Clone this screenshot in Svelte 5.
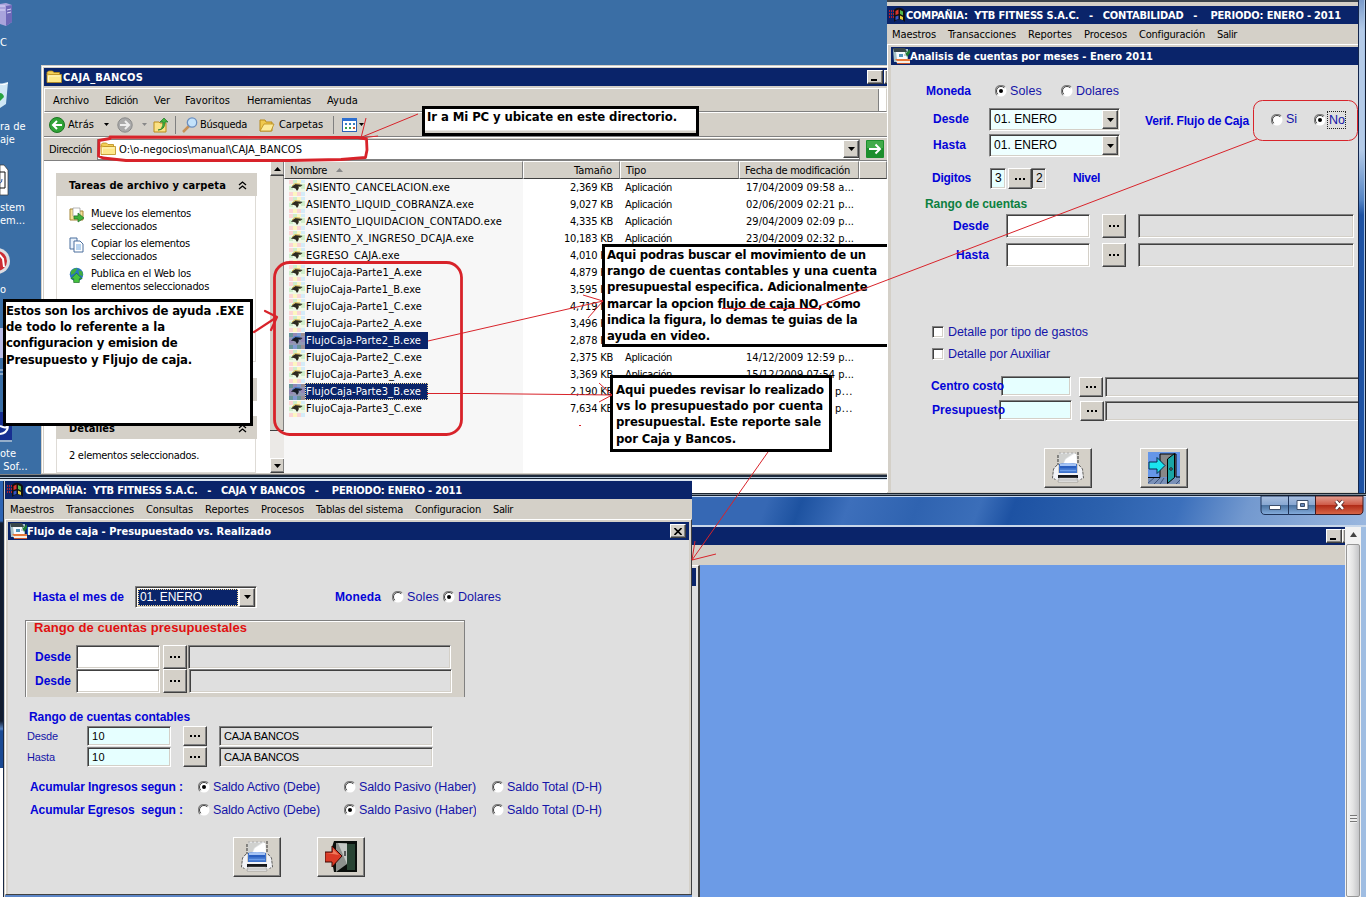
<script>
  function fit(node, width) {
    if (!width) return;
    const now = node.getBoundingClientRect().width;
    node.style.letterSpacing = (width - now) / node.textContent.length + 'px';
  }

  const files = [
    ['ASIENTO_CANCELACION.exe', 144, '2,369 KB', '17/04/2009 09:58 a...'],
    ['ASIENTO_LIQUID_COBRANZA.exe', 168, '9,027 KB', '02/06/2009 02:21 p...'],
    ['ASIENTO_LIQUIDACION_CONTADO.exe', 196, '4,335 KB', '29/04/2009 02:09 p...'],
    ['ASIENTO_X_INGRESO_DCAJA.exe', 168, '10,183 KB', '23/04/2009 02:32 p...'],
    ['EGRESO_CAJA.exe', 94, '4,010 KB', ''],
    ['FlujoCaja-Parte1_A.exe', 116, '4,879 KB', ''],
    ['FlujoCaja-Parte1_B.exe', 115, '3,595 KB', ''],
    ['FlujoCaja-Parte1_C.exe', 116, '4,719 KB', ''],
    ['FlujoCaja-Parte2_A.exe', 116, '3,496 KB', ''],
    ['FlujoCaja-Parte2_B.exe', 115, '2,878 KB', '', true],
    ['FlujoCaja-Parte2_C.exe', 116, '2,375 KB', '14/12/2009 12:59 p...'],
    ['FlujoCaja-Parte3_A.exe', 116, '3,369 KB', '15/12/2009 07:54 p...'],
    ['FlujoCaja-Parte3_B.exe', 115, '2,190 KB', 'p...', true],
    ['FlujoCaja-Parte3_C.exe', 116, '7,634 KB', 'p...']
  ];
</script>

{#snippet t(text, w, cls = '')}<span class="t {cls}" use:fit={w}>{text}</span>{/snippet}

{#snippet radio(on)}
  <svg class="radio" width="12" height="12" viewBox="0 0 12 12">
    <circle cx="6" cy="6" r="5.5" fill="#fff" />
    <path d="M2 10A5.5 5.5 0 0 1 10 2" fill="none" stroke="#808080" stroke-width="1.1" />
    <path d="M2.8 9.2A4.5 4.5 0 0 1 9.2 2.8" fill="none" stroke="#404040" stroke-width="1" />
    {#if on}<circle cx="6" cy="6" r="2" fill="#000" />{/if}
  </svg>
{/snippet}

{#snippet dots()}<span class="btn"><svg width="11" height="2" viewBox="0 0 11 2" shape-rendering="crispEdges"><path d="M0 0h2v2H0zM4 0h2v2H4zM8 0h2v2H8z" fill="#000" /></svg></span>{/snippet}

{#snippet down()}<span class="btn arrow"><svg width="7" height="4" viewBox="0 0 7 4"><path d="M0 0H7L3.500 4Z" fill="#000" /></svg></span>{/snippet}

{#snippet folder()}
  <svg width="16" height="16" viewBox="0 0 16 16">
    <path d="M1 3.500 2.500 2h4L8 3.500h5.500V6H1z" fill="#f3cf56" stroke="#b98b1b" stroke-width=".8" />
    <path d="M1 13.500V5L4 5.500h11.500v8z" fill="#fde88a" stroke="#b98b1b" stroke-width=".8" />
    <path d="M2.500 12.500V7h12" fill="none" stroke="#fff6c4" />
  </svg>
{/snippet}

{#snippet bird()}
  <svg width="16" height="16" viewBox="0 0 16 16">
    <rect width="16" height="16" fill="#eef8e6" />
    <path d="M0 0h4v4H0zM8 12h4v4H8zM0 12h4v4H0z" fill="#fbd5d5" />
    <path d="M4 0h4v4H4zM12 4h4v5h-4zM0 6h4v4H0z" fill="#cfeecb" />
    <path d="M8 0h4v3H8zM4 12h4v4H4z" fill="#fdf7c0" />
    <path d="M12 0h4v3h-4zM12 12h4v4h-4z" fill="#d5ecf8" />
    <path d="M2 8 4 5.500 6.500 4 10 4.200 13.500 5 12 6.200 10 6.500 9.500 9 8 11 6.500 8.500 4 7.700Z" fill="#2d2a20" />
    <path d="M3 6 6 3.600l5 .4" stroke="#d9b84a" fill="none" />
    <path d="m9 7 3-1" stroke="#6d7448" fill="none" />
  </svg>
{/snippet}

{#snippet appicon()}
  <svg width="16" height="16" viewBox="0 0 16 16">
    <path d="M0 4h5M0 7h5M0 10h5" stroke="#b3202c" stroke-dasharray="1 1" stroke-width="2" />
    <path d="M5 3C8 0 13 0 16 4v11C12 11 9 12 5 15Z" fill="#111" />
    <path d="m6.500 4 3-1.500V7L6.500 8z" fill="#d8362e" /><path d="m11 3 3 1.500v4L11 7z" fill="#52b84c" />
    <path d="m6.500 9.500 3-1V12l-3 1z" fill="#3556c8" /><path d="m11 8.500 3 1.500v3L11 12z" fill="#e7cf3b" />
  </svg>
{/snippet}

{#snippet formicon()}
  <svg width="17" height="16" viewBox="0 0 17 16">
    <path d="M0 1h15v13H1z" fill="#a9c4c8" /><path d="M0 0h12l2 4H1z" fill="#39474a" />
    <path d="M3 4h11v7H4z" fill="#f7fbff" /><path d="M6 6h4v3H6z" fill="#4f93b8" /><path d="M11 7h2" stroke="#99a" />
    <path d="m11 2 2 3 4-4v4l-3 4z" fill="#207b36" /><path d="M2 11h15v2H4z" fill="#e8793a" /><path d="M3 13h14v2H4z" fill="#f5eee4" /><path d="M4 15h13v1H4z" fill="#c8552d" />
  </svg>
{/snippet}

{#snippet printer()}
  <svg width="32" height="32" viewBox="0 0 32 32">
    <path d="M6.500 15V3L8 1h15l2 2v12z" fill="#e2e4e6" />
    <path d="M6 3v10M26 0v12" stroke="#333" stroke-dasharray="3 1" /><path d="M7 1h17" stroke="#aaa" stroke-dasharray="2 2" />
    <path d="M12 11 14 7 22 2h2l1 9z" fill="#fff" /><path d="M7 2h13L13 7l-2 5H7z" fill="#d0d1cf" />
    <path d="M7 12q8-2 18 0v9H7z" fill="#3d72cc" /><path d="M8 12q8-2 16 0v4H8z" fill="#a6c4f4" /><path d="M8 15h16" stroke="#2a5fc0" stroke-width="2" /><path d="M8 18.500h16" stroke="#6c9eea" stroke-width="1.500" />
    <path d="M6 13 2 16 .5 26l3 1.500H29l2.500-1.500L30 16l-4-3v8H6z" fill="#f2f3f7" />
    <path d="M5 13 1.500 17 .5 26l3 1.500M27 13l3.500 4 1 9-3 1.500" fill="none" stroke="#555" stroke-dasharray="3 1" stroke-width=".9" />
    <path d="M6 23h20v3H6z" fill="#16171b" /><path d="M7 26h18l1 4H6z" fill="#fff" stroke="#888" stroke-width=".6" /><path d="M7 28h18" stroke="#999" />
  </svg>
{/snippet}

{#snippet chevrons()}
  <svg width="9" height="9" viewBox="0 0 9 9"><path d="m1 4 3.500-3L8 4M1 8l3.500-3L8 8" fill="none" stroke="#000" stroke-width="1.300" /></svg>
{/snippet}

<div class="desktop">
  <svg class="shortcuts" width="40" height="475" viewBox="0 0 40 475">
    <path d="m0 4 6-1 6 2v17l-6 4-6-2z" fill="#a9a4dc" /><path d="m6 6 6-1v17l-6 4z" fill="#6f68b8" /><path d="M0 6h5M0 10h5M7 10l4-1M7 13l4-1" stroke="#dcd9fa" />
    <path d="M0 84 8 82 6 104 0 108z" fill="#cfe7f5" /><path d="M0 93q3 0 4 4l-4 4z" fill="#26a340" /><path d="M0 84q4 2 8-1" stroke="#fff" fill="none" />
    <path d="M0 165h4l4 5v25H0z" fill="#fff" stroke="#333" stroke-width=".7" /><path d="M0 172h5v16H0" fill="none" stroke="#111" /><path d="M0 183q2 0 2-4" stroke="#2858a8" fill="none" />
    <circle cx="-3" cy="261" r="13" fill="#dcdde2" /><circle cx="-3" cy="261" r="10" fill="#cc2c33" /><path d="m-1 254 4 5 1 8" stroke="#fff" fill="none" stroke-width="2" />
    <path d="M0 328h4v30H0z" fill="#b9bce6" /><path d="M0 370h4M0 374h4" stroke="#dde5ee" />
    <path d="M0 412h12v28H0z" fill="#172f91" /><path d="M0 426q8 4 9-3M0 434q7-1 8-7" stroke="#fff" fill="none" stroke-width="2" />
    <path d="M0 441h12" stroke="#eee" />
  </svg>
  <div class="captions">
    <span class="c1">PC</span><span class="c2">ra de<br />aje</span><span class="c3">stem<br />em...</span><span class="c4">o</span><span class="c5">ote<br />&nbsp;Sof...</span>
  </div>

  <section class="explorer">
    <header class="title">{@render folder()}{@render t('CAJA_BANCOS', 80)}<span class="btn min"></span><span class="btn min2"></span></header>
    <nav class="exmenu">
      {@render t('Archivo', 36)}{@render t('Edición', 33)}{@render t('Ver', 16)}{@render t('Favoritos', 45)}{@render t('Herramientas', 64)}{@render t('Ayuda', 31)}<i></i>
    </nav>
    <div class="tools">
      <svg width="16" height="16" viewBox="0 0 16 16"><circle cx="8" cy="8" r="7.500" fill="#2fa336" stroke="#1c7523" /><path d="M13 8H4M8 4 4 8l4 4" stroke="#fff" stroke-width="2" fill="none" /></svg>
      {@render t('Atrás', 26)}
      <svg width="5" height="3"><path d="M0 0h5L2.500 3z" /></svg>
      <svg width="16" height="16" viewBox="0 0 16 16"><circle cx="8" cy="8" r="7.200" fill="#a9a9a9" stroke="#8a8a8a" /><path d="M3 8h9M8 4l4 4-4 4" stroke="#eee" stroke-width="2" fill="none" /></svg>
      <svg width="5" height="3"><path d="M0 0h5L2.500 3z" fill="#888" /></svg>
      <svg width="16" height="16" viewBox="0 0 16 16"><path d="M1 5h5l1 1h6v9H1z" fill="#fbe284" stroke="#b98b1b" /><path d="M5 13q5 0 5-8H7l4-4 4 4h-3q0 8-7 8z" fill="#43b63e" stroke="#207526" stroke-width=".7" /></svg>
      <b></b>
      <svg width="16" height="16" viewBox="0 0 16 16"><path d="m1 15 6-6" stroke="#c79157" stroke-width="2.500" /><circle cx="10" cy="5.500" r="4.700" fill="#c3e2fb" stroke="#6b8fc0" stroke-width="1.300" /></svg>
      {@render t('Búsqueda', 47)}
      <svg width="16" height="16" viewBox="0 0 16 16"><path d="M1 3h5l1 2h6v9H1z" fill="#f0c94e" stroke="#b98b1b" /><path d="M5 7h10l-3 7H1z" fill="#fdeb9a" stroke="#b98b1b" stroke-width=".8" /></svg>
      {@render t('Carpetas', 44)}
      <b></b>
      <svg width="15" height="14" viewBox="0 0 15 14"><rect x=".5" y=".5" width="14" height="13" fill="#fff" stroke="#2a62b8" /><path d="M0 0h15v3H0z" fill="#2d6fd0" /><path d="M3 6h2M7 6h2M11 6h2" stroke="#3a7fc2" stroke-width="2" /><path d="M3 10h2M7 10h2" stroke="#35a04a" stroke-width="2" /><path d="M11 10h2" stroke="#c05a3a" stroke-width="2" /></svg>
      <svg width="5" height="3"><path d="M0 0h5L2.500 3z" /></svg>
    </div>
    <div class="address">
      {@render t('Dirección', 43)}
      <div class="path">{@render folder()}{@render t('O:\\o-negocios\\manual\\CAJA_BANCOS', 183)}{@render down()}</div>
      <svg width="18" height="18" viewBox="0 0 18 18"><rect width="18" height="18" rx="1" fill="#1c8f2c" /><path d="M1 1h16v7H1z" fill="#41ab49" /><path d="M3 9h11M9.500 4.500 14 9l-4.500 4.500" stroke="#fff" stroke-width="2" fill="none" /></svg>
    </div>
    <div class="content">
      <aside>
        <div class="phead first">{@render t('Tareas de archivo y carpeta', 157)}{@render chevrons()}</div>
        <div class="pbody tasks">
          <div class="task">
            <svg width="15" height="16" viewBox="0 0 15 16"><path d="M1 2h6l1 2h6v9H1z" fill="#f6e197" stroke="#a38638" /><path d="M4 1h7v8H4z" fill="#fff" stroke="#888" stroke-width=".6" /><path d="M5 9h4V6l6 5-6 4v-3H5z" fill="#40b23b" stroke="#1f7022" stroke-width=".7" /></svg>
            <p>{@render t('Mueve los elementos', 100)}<br />{@render t('seleccionados', 66)}</p>
          </div>
          <div class="task">
            <svg width="15" height="16" viewBox="0 0 15 16"><path d="M1 1h7v11H1z" fill="#e9f2fc" stroke="#4b6e9d" /><path d="M5 4h6l3 3v8H5z" fill="#fff" stroke="#4b6e9d" /><path d="M7 8h5M7 10h5M7 12h5" stroke="#70a8df" /></svg>
            <p>{@render t('Copiar los elementos', 99)}<br />{@render t('seleccionados', 66)}</p>
          </div>
          <div class="task">
            <svg width="16" height="16" viewBox="0 0 16 16"><circle cx="8" cy="7.500" r="7.200" fill="#2a75c4" /><path d="M2 4q4-4 7-3L6 6 2 8zM10 3l4 1 1 5-4-1z" fill="#43ae3c" /><path d="m8 6 6 6h-3v4H5v-4H2z" fill="#45c23e" stroke="#176b25" stroke-width=".7" /></svg>
            <p>{@render t('Publica en el Web los', 100)}<br />{@render t('elementos seleccionados', 118)}</p>
          </div>
        </div>
        <div class="phead mid"></div>
        <div class="phead details">{@render t('Detalles', 46)}{@render chevrons()}</div>
        <div class="pbody info">{@render t('2 elementos seleccionados.', 130)}</div>
      </aside>
      <div class="scroll">
        <span class="btn"><svg width="7" height="4"><path d="M0 4h7L3.500 0z" /></svg></span>
        <span class="thumb"></span><span class="track"></span>
        {@render down()}
      </div>
      <div class="list">
        <div class="cols head">
          <span>{@render t('Nombre', 37)}<svg width="7" height="4"><path d="M0 4h7L3.500 0z" fill="#888" /></svg></span>
          <span class="num">{@render t('Tamaño', 38)}</span><span>{@render t('Tipo', 20)}</span><span>{@render t('Fecha de modificación', 105)}</span><span></span>
        </div>
        {#each files as [name, w, size, date, sel], i}
          <div class="cols">
            <span class="name" class:sel class:focus={i === 12}><i>{@render bird()}</i><em>{@render t(name, w)}</em></span>
            <span class="num">{@render t(size, size.length > 8 ? 49 : 43)}</span>
            <span class="kind">{#if i < 4 || i === 10 || i === 11}{@render t('Aplicación', 47)}{/if}</span>
            <span class="date" class:tail={date.length === 4}>{#if date}{@render t(date, date.length === 4 ? 18 : 108)}{/if}</span>
          </div>
        {/each}
      </div>
    </div>
  </section>
  <div class="seam"></div>

  <section class="aero">
    <div class="glass"></div>
    <svg class="caps" width="104" height="20" viewBox="0 0 104 20">
      <defs>
        <linearGradient id="cb" x2="0" y2="1"><stop offset="0" stop-color="#a9c0e0" /><stop offset=".48" stop-color="#88a7d2" /><stop offset=".5" stop-color="#49719f" /><stop offset="1" stop-color="#86aede" /></linearGradient>
        <linearGradient id="cr" x2="0" y2="1"><stop offset="0" stop-color="#e3a093" /><stop offset=".48" stop-color="#cf5a47" /><stop offset=".5" stop-color="#b02a17" /><stop offset="1" stop-color="#d96849" /></linearGradient>
      </defs>
      <path d="M1 0h27.500v18.500H5Q1 18.500 1 14z" fill="url(#cb)" stroke="#1f3358" /><path d="M28.500 0h27v18.500h-27z" fill="url(#cb)" stroke="#1f3358" />
      <path d="M55.500 0H103v14q0 4.500-4 4.500H55.500z" fill="url(#cr)" stroke="#3e1a20" />
      <path d="M9.500 9.500h11v4h-11z" fill="#fff" stroke="#3d4f6b" /><path d="M37 4.500h11v9H37z" fill="#fff" stroke="#3d4f6b" /><path d="M40.500 7.500h4v3h-4z" fill="#6a89b8" stroke="#3d4f6b" />
      <path d="m76 5 7 8m0-8-7 8" stroke="#4b2224" stroke-width="4" /><path d="m76 5 7 8m0-8-7 8" stroke="#fff" stroke-width="2.500" />
    </svg>
    <div class="inner">
      <div class="mdi"><div class="navy"><span class="btn min"></span><span class="btn min2"></span></div><div class="gray"></div><div class="canvas"><span class="stub"><b></b></span></div></div>
      <div class="vscroll"><svg width="7" height="5"><path d="M0 5h7L3.500 0z" fill="#444" /></svg><span><i></i></span></div>
    </div>
  </section>

  <section class="rightwin">
    <header class="apptitle">{@render appicon()}{@render t('COMPAÑIA:  YTB FITNESS S.A.C.   -   CONTABILIDAD   -    PERIODO: ENERO - 2011', 435)}</header>
    <nav class="appmenu">{@render t('Maestros', 44)}{@render t('Transacciones', 68)}{@render t('Reportes', 44)}{@render t('Procesos', 43)}{@render t('Configuración', 66)}{@render t('Salir', 20)}</nav>
    <div class="child">
      <header class="title">{@render formicon()}{@render t('Analisis de cuentas por meses - Enero 2011', 243)}</header>
      <div class="form">
        <div class="row moneda">{@render t('Moneda', 45, 'lab')}{@render radio(true)}{@render t('Soles', 32, 'opt')}{@render radio(false)}{@render t('Dolares', 43, 'opt')}</div>
        <div class="row desde">{@render t('Desde', 36, 'lab')}<span class="field combo">{@render t('01. ENERO', 63)}{@render down()}</span>{@render t('Verif. Flujo de Caja', 104, 'lab verif')}{@render radio(false)}{@render t('Si', 11, 'opt')}{@render radio(true)}<span class="dotted">{@render t('No', 16, 'opt')}</span></div>
        <div class="row hasta">{@render t('Hasta', 33, 'lab')}<span class="field combo">{@render t('01. ENERO', 63)}{@render down()}</span></div>
        <div class="row digits">{@render t('Digitos', 39, 'lab')}<span class="field cyan">3</span>{@render dots()}<span class="field off">2</span>{@render t('Nivel', 27, 'lab')}</div>
        <div class="row rango">{@render t('Rango de cuentas', 102, 'lab green')}</div>
        <div class="row acct a1">{@render t('Desde', 36, 'lab')}<span class="field"></span>{@render dots()}<span class="field off"></span></div>
        <div class="row acct a2">{@render t('Hasta', 33, 'lab r')}<span class="field"></span>{@render dots()}<span class="field off"></span></div>
        <div class="row check k1"><span class="field box"></span>{@render t('Detalle por tipo de gastos', 140, 'opt')}</div>
        <div class="row check k2"><span class="field box"></span>{@render t('Detalle por Auxiliar', 102, 'opt')}</div>
        <div class="row cost">{@render t('Centro costo', 73, 'lab')}<span class="field cyan"></span>{@render dots()}<span class="field off open"></span></div>
        <div class="row pres">{@render t('Presupuesto', 73, 'lab')}<span class="field cyan"></span>{@render dots()}<span class="field off open"></span></div>
        <div class="row actions">
          <span class="btn big">{@render printer()}</span>
          <span class="btn big"><svg width="32" height="32" viewBox="0 0 32 32"><path d="M0 0h32v32H0z" fill="#6596e8" /><path d="M0 26h32v6H0z" fill="#7990b8" /><path d="m0 31 6-5m0 6 6-6m0 6 4-6m12 6 4-4" stroke="#3c527c" /><path d="M0 25.500h12V2h16v23h4" fill="#888" stroke="#000" /><path d="M19.500 7 26.500 1.500v24l-7 6z" fill="#1aa5a5" stroke="#000" /><path d="M1 10h8V5.500l8 8-8 8V17H1z" fill="#1be5ee" stroke="#062a4c" /><circle cx="23" cy="17" r="1.200" fill="#bdf" stroke="#000" /></svg></span>
        </div>
      </div>
    </div>
  </section>
  <div class="edge"></div>

  <div class="leftstrip"></div>
  <section class="leftwin">
    <header class="apptitle">{@render appicon()}{@render t('COMPAÑIA:  YTB FITNESS S.A.C.   -   CAJA Y BANCOS   -    PERIODO: ENERO - 2011', 437)}</header>
    <nav class="appmenu">{@render t('Maestros', 44)}{@render t('Transacciones', 68)}{@render t('Consultas', 47)}{@render t('Reportes', 44)}{@render t('Procesos', 43)}{@render t('Tablas del sistema', 87)}{@render t('Configuracion', 66)}{@render t('Salir', 20)}</nav>
    <div class="child">
      <header class="title">{@render formicon()}{@render t('Flujo de caja - Presupuestado vs. Realizado', 244)}<span class="btn close"><svg width="8" height="7"><path d="m.5 0 7 7m0-7-7 7" stroke="#000" stroke-width="1.600" /></svg></span></header>
      <div class="form">
        <div class="row month">{@render t('Hasta el mes de', 91, 'lab')}<span class="field combo picked"><u>{@render t('01. ENERO', 62)}</u>{@render down()}</span>{@render t('Moneda', 46, 'lab')}{@render radio(false)}{@render t('Soles', 32, 'opt')}{@render radio(true)}{@render t('Dolares', 43, 'opt')}</div>
        <div class="group">
          <div class="gtitle">{@render t('Rango de cuentas presupuestales', 213, 'red')}</div>
          <div class="row pair">{@render t('Desde', 36, 'lab')}<span class="field"></span>{@render dots()}<span class="field off"></span></div>
          <div class="row pair p2">{@render t('Desde', 36, 'lab')}<span class="field"></span>{@render dots()}<span class="field off"></span></div>
        </div>
        <div class="row rango">{@render t('Rango de cuentas contables', 161, 'lab')}</div>
        <div class="row cont">{@render t('Desde', 31, 'small')}<span class="field cyan">{@render t('10', 13)}</span>{@render dots()}<span class="field off">{@render t('CAJA BANCOS', 75)}</span></div>
        <div class="row cont c2">{@render t('Hasta', 28, 'small')}<span class="field cyan">{@render t('10', 13)}</span>{@render dots()}<span class="field off">{@render t('CAJA BANCOS', 75)}</span></div>
        <div class="row sum s1">{@render t('Acumular Ingresos segun :', 153, 'lab')}{@render radio(true)}{@render t('Saldo Activo (Debe)', 107, 'opt')}{@render radio(false)}{@render t('Saldo Pasivo (Haber)', 117, 'opt')}{@render radio(false)}{@render t('Saldo Total (D-H)', 95, 'opt')}</div>
        <div class="row sum s2">{@render t('Acumular Egresos  segun :', 153, 'lab')}{@render radio(false)}{@render t('Saldo Activo (Debe)', 107, 'opt')}{@render radio(true)}<span class="cut">{@render t('Saldo Pasivo (Haber)', 118, 'opt')}</span>{@render radio(false)}{@render t('Saldo Total (D-H)', 95, 'opt')}</div>
        <div class="row actions">
          <span class="btn big">{@render printer()}</span>
          <span class="btn big"><svg width="32" height="32" viewBox="0 0 32 32"><path d="M9 0h23v31H9L7 20V6z" fill="#0a0e0b" /><path d="M22 3h8v26h-8z" fill="#294433" /><path d="m11 2 11 0v21l-11 8z" fill="#8d918d" /><path d="m13 2 9 1v20z" fill="#c5c8c5" /><path d="M20 10v5" stroke="#333" stroke-width="1.500" /><path d="M0 11h7V5l10 10L7 26v-5H0z" fill="#d93a26" stroke="#3c0905" /><path d="M1 12h7V8l6 6z" fill="#ef7a5c" /></svg></span>
        </div>
      </div>
    </div>
  </section>

  <div class="note n1">{@render t('Ir a Mi PC y ubicate en este directorio.', 250)}</div>
  <div class="note n2">
    {@render t('Aqui podras buscar el movimiento de un', 259)}
    {@render t('rango de cuentas contables y una cuenta', 270)}
    {@render t('presupuestal especifica. Adicionalmente', 260)}
    {@render t('marcar la opcion flujo de caja NO, como', 253)}
    {@render t('indica la figura, lo demas te guias de la', 250)}
    {@render t('ayuda en video.', 103)}
  </div>
  <div class="note n3">
    {@render t('Aqui puedes revisar lo realizado', 208)}
    {@render t('vs lo presupuestado por cuenta', 207)}
    {@render t('presupuestal. Este reporte sale', 205)}
    {@render t('por Caja y Bancos.', 120)}
  </div>
  <div class="note n4">
    {@render t('Estos son los archivos de ayuda .EXE', 238)}
    {@render t('de todo lo referente a la', 159)}
    {@render t('configuracion y emision de', 171)}
    {@render t('Presupuesto y Fljujo de caja.', 186)}
  </div>

  <svg class="ink" width="1366" height="897" viewBox="0 0 1366 897" fill="none" stroke="#d8232a">
    <g stroke-width="2.800" stroke-linejoin="round" stroke-linecap="round">
      <path d="M110 138.500 99 140.500 98.500 156 103 158 126 160.500 290 160.500 341 159.500 365.500 157.500 367 150 366.500 139 358 137.500 110 137" />
      <rect x="274.500" y="262.500" width="187" height="172" rx="15" />
      <path d="M254 332 277 317 265 311M277 317 271 330" stroke-width="2.200" />
    </g>
    <path d="M418 114 362 137M366 118l-5 20 17-2" />
    <path d="m428 341 175-40-20-6M603 301l-15 17" />
    <path d="M427 393.500h48l137 1.500-13-12M612 395l-13 7" />
    <path d="M768 452 692 560l3-19M692 560l24-6" />
    <rect x="1253.500" y="100.500" width="104" height="40" rx="9" />
    <path d="M1257 139 819 306M722 308.500h98M579 425.500h2" />
  </svg>
</div>

<style>
  :global(body) { margin: 0; overflow: hidden; }
  * { box-sizing: border-box; }
  .desktop { position: relative; width: 1366px; height: 897px; overflow: hidden; background: #3a6ea5; color: #000; font: 11px/13px "DejaVu Sans Condensed", "DejaVu Sans", sans-serif; font-stretch: condensed; }
  section, .note, .seam, .edge, .leftstrip, .ink, .shortcuts { position: absolute; }
  svg { display: block; flex: none; }
  .t { display: inline-block; white-space: pre; flex: none; justify-self: start; }
  .shortcuts { left: 0; top: 0; }
  .captions span { position: absolute; left: 0; color: #fff; white-space: nowrap; }
  .captions .c1 { top: 36px; left: -6px; }
  .captions .c2 { top: 119px; }
  .captions .c3 { top: 201px; }
  .captions .c4 { top: 283px; }
  .captions .c5 { top: 447px; }

  .btn { display: flex; align-items: center; justify-content: center; background: #d4d0c8; border: 1px solid; border-color: #fff #404040 #404040 #fff; box-shadow: inset -1px -1px #808080; flex: none; }
  .field { display: flex; align-items: center; background: #fff; border: 1px solid; border-color: #808080 #fff #fff #808080; box-shadow: inset 1px 1px #404040, inset -1px -1px #d4d0c8; overflow: hidden; }
  .title, .apptitle { display: flex; align-items: center; height: 18px; background: #0a246a; color: #fff; font-weight: bold; }
  .min { width: 16px; height: 14px; position: relative; }
  .min::after { content: ""; position: absolute; left: 3px; bottom: 2px; width: 6px; height: 2px; background: #000; }
  .min2 { width: 3px; height: 14px; border-right: 0; }

  .explorer { left: 41px; top: 65px; width: 846px; height: 410px; overflow: hidden; background: #d4d0c8; border: solid #d4d0c8; border-width: 1px 0 2px 1px; box-shadow: inset 1px 1px #fff; padding: 2px 0 0 2px; }
  .explorer .title { padding-left: 2px; gap: 1px; }
  .explorer .title .min { margin-left: auto; }
  .exmenu { display: flex; align-items: center; height: 24px; margin-top: 2px; padding-left: 8px; border: 1px solid; border-color: #fff #d4d0c8 #808080 #fff; position: relative; }
  .exmenu .t:nth-child(2) { margin-left: 16px; }
  .exmenu .t:nth-child(3) { margin-left: 16px; }
  .exmenu .t:nth-child(4) { margin-left: 15px; }
  .exmenu .t:nth-child(5) { margin-left: 17px; }
  .exmenu .t:nth-child(6) { margin-left: 16px; }
  .exmenu i { margin-left: auto; align-self: stretch; width: 8px; background: #fff; border-left: 1px solid #808080; }
  .tools { display: grid; grid-template-columns: 19px 36px 13px 25px 11px 22px 7px 18px 59px 20px 54px 9px 17px 5px; align-items: center; height: 25px; padding-left: 5px; border-bottom: 1px solid #808080; border-top: 1px solid #fff; }
  .tools b { width: 1px; height: 18px; background: #808080; }
  .address { display: flex; align-items: center; height: 24px; padding: 0 2px 0 5px; border-top: 1px solid #fff; border-bottom: 1px solid #808080; }
  .path { display: flex; align-items: center; height: 21px; width: 763px; margin: 0 6px 0 5px; padding-left: 2px; background: #fff; border: 1px solid #808080; }
  .path .t { margin-left: 3px; }
  .path .btn { width: 16px; height: 18px; margin-left: auto; }
  .content { display: flex; height: 313px; background: #fff; }
  aside { width: 226px; padding: 12px 14px 0 12px; }
  .phead { display: flex; align-items: center; height: 23px; width: 201px; background: #d4d0c8; padding: 2px 10px 0 13px; font-weight: bold; }
  .phead svg { margin-left: auto; }
  .pbody { width: 200px; border: 1px solid #dedbd6; border-top: 0; }
  .tasks { height: 166px; padding: 11px 0 0 12px; }
  .task { display: flex; gap: 7px; height: 30px; }
  .task svg { width: 15px; }
  .task p { margin: 0; }
  .mid { margin-top: 16px; }
  .details { margin-top: 15px; }
  .info { height: 34px; padding: 10px 0 0 12px; }
  .scroll { width: 14px; display: flex; flex-direction: column; background: #e9e6e1; }
  .scroll .btn { width: 15px; height: 15px; }
  .thumb { height: 255px; background: #d4d0c8; border-right: 1px solid #808080; border-bottom: 1px solid #404040; }
  .track { height: 27px; background: #ebe9e6; }
  .list { flex: 1; background: linear-gradient(90deg, #f7f7f7 239px, #fff 239px); }
  .cols { display: grid; grid-template-columns: 239px 97px 119px 120px 28px; height: 17px; align-items: center; }
  .cols > span { display: flex; align-items: center; }
  .head { height: 18px; }
  .head > span { height: 18px; padding-left: 5px; background: #d4d0c8; border: solid; border-width: 1px 1px 1px 1px; border-color: #fff #808080 #404040 #fff; }
  .head svg { margin-left: 9px; }
  .cols .num { justify-content: flex-end; padding: 0 7px 0 0; }
  .cols .kind { padding-left: 5px; }
  .cols .date { padding-left: 7px; }
  .cols .tail { padding-left: 96px; }
  .name { padding-left: 5px; height: 17px; }
  .name i { display: block; height: 16px; overflow: hidden; }
  .name em { font-style: normal; padding-left: 1px; height: 17px; line-height: 17px; width: 123px; white-space: nowrap; }
  .sel i { filter: brightness(.6) sepia(.2) hue-rotate(170deg) saturate(1.8); }
  .sel em { background: #0a246a; color: #fff; }
  .focus em { outline: 1px dotted #f5db95; outline-offset: -1px; }
  .seam { left: 0; top: 474px; width: 887px; height: 7px; background: linear-gradient(#808080 1px, #1c2a3c 1px 3px, #b7c9dc 3px 4px, #14202f 4px 5px, #d9e4f0 5px); }

  .aero { left: 692px; top: 480px; width: 674px; height: 417px; background: #9fbde2; }
  .glass { height: 45px; background: linear-gradient(#fff 13px, #1b2530 13px 14px, #7f8b98 14px 15px, #14202f 15px 16px, #c6d8ef 16px 17px, transparent 17px), linear-gradient(110deg, #3668b4 0 12%, #1d52a0 17%, #3d6fbb 24%, #2f63b0 34%, #3b6eb9 43%, #1d52a3 48%, #2d62ae 62%, #3c70bc 72%, #7399cf 82%, #9ab7df); }
  .caps { position: absolute; left: 568px; top: 16px; }
  .inner { display: flex; height: 372px; border-top: 2px solid #c8d7ea; }
  .mdi { width: 653px; }
  .navy { display: flex; align-items: center; height: 18px; background: #0a246a; }
  .navy .min { margin-left: auto; }
  .gray { height: 20px; background: #d4d0c8; }
  .canvas { height: 332px; background: #6c9be6; display: flex; }
  .stub { width: 8px; height: 332px; background: #dfdfdf; border: solid; border-color: #fff #404040 #404040; border-width: 1px 2px 0 0; padding-top: 2px; }
  .stub b { display: block; width: 4px; height: 18px; background: #0a246a; }
  .vscroll { width: 16px; background: #f2f2f2; display: flex; flex-direction: column; align-items: center; padding-top: 5px; }
  .vscroll span { margin-top: 7px; width: 14px; flex: 1; border: 1px solid #979797; border-radius: 2px; background: linear-gradient(90deg, #f5f5f5, #e3e3e3 50%, #c4c5c8); padding-top: 270px; }
  .vscroll i { display: block; margin: auto; width: 7px; height: 8px; background: repeating-linear-gradient(#777 0 1px, #eee 1px 3px); }

  .rightwin { left: 887px; top: 0; width: 472px; height: 493px; background: #d4d0c8; border-top: 2px solid #39424c; padding-top: 4px; }
  .rightwin .apptitle { padding-left: 2px; gap: 1px; }
  .appmenu { display: flex; align-items: center; height: 20px; gap: 12px; padding-left: 5px; }
  .child { border: solid #fff; border-width: 1px 0 0 1px; padding: 2px 0 0 3px; }
  .form { background: #dfdfdf; font-family: "Liberation Sans", Arial, sans-serif; display: flow-root; }
  .rightwin .title { padding-left: 2px; gap: 0; }
  .rightwin .form { height: 427px; }
  .row { display: grid; align-items: center; }
  .row > .field, .row > .btn { height: 100%; }
  .lab { color: #0404d8; font-weight: bold; font-size: 12px; }
  .opt { color: #1414a8; font-size: 12.500px; }
  .small { color: #1414a8; font-size: 11px; }
  .green { color: #0c8040; }
  .red { color: #e01010; font-weight: bold; font-size: 13px; }
  .combo { background: #eff; font-size: 12px; padding-left: 4px; }
  .combo .btn { margin: 1px 1px 1px auto; width: 16px; height: 19px; }
  .cyan { background: #e6ffff; padding-left: 4px; font-size: 12px; }
  .off { background: #dfdfdf; padding-left: 4px; font-size: 12px; }
  .rightwin .moneda { grid-template-columns: 69px 15px 51px 15px auto; height: 22px; margin-top: 15px; padding-left: 35px; }
  .rightwin .desde { grid-template-columns: 56px 131px 25px 126px 15px 28px 13px auto; height: 23px; margin-top: 6px; padding-left: 42px; }
  .verif { grid-column: 4; padding-top: 3px; }
  .dotted { border: 1px dotted #222; width: 19px; height: 18px; padding: 1px 0 0 1px; line-height: 14px; }
  .rightwin .hasta { grid-template-columns: 56px 131px; height: 23px; margin-top: 3px; padding-left: 42px; }
  .digits { grid-template-columns: 58px 16px 24px 16px auto; height: 21px; margin-top: 11px; padding-left: 41px; }
  .digits .btn { width: 24px; margin-left: 2px; position: relative; }
  .digits .off { margin-left: 1px; }
  .digits .lab:last-child { margin-left: 27px; }
  .rightwin .rango { height: 18px; margin-top: 6px; padding-left: 34px; }
  .acct { grid-template-columns: 53px 84px 24px 216px; column-gap: 0; height: 24px; padding-left: 62px; }
  .acct .btn { margin-left: 12px; width: 24px; }
  .acct .off { margin-left: 24px; width: 216px; }
  .a1 { margin-top: 1px; }
  .a2 { margin-top: 5px; }
  .acct .r { margin-left: 3px; }
  .check { grid-template-columns: 16px auto; height: 18px; padding-left: 41px; }
  .row > .box { width: 12px; height: 12px; margin-top: -1px; }
  .k1 { margin-top: 56px; }
  .k2 { margin-top: 4px; }
  .cost { grid-template-columns: 70px 70px 8px 26px 254px; height: 20px; margin-top: 13px; padding-left: 40px; }
  .pres { grid-template-columns: 67px 73px 8px 25px 255px; height: 20px; margin-top: 4px; padding-left: 41px; }
  .cost .lab, .pres .lab { z-index: 1; }
  .cost .btn, .pres .btn { grid-column: 4; width: 24px; position: relative; top: 1px; }
  .open { position: relative; top: 1px; border-right: 0; }
  .actions { grid-template-columns: 96px 48px; height: 40px; }
  .big { width: 48px; }
  .rightwin .actions { margin-top: 28px; padding-left: 153px; }
  .edge { left: 1358px; top: 0; width: 8px; height: 493px; background: linear-gradient(90deg, #14264c 1px, transparent 1px 6px, #a8c4e6 6px 7px, #101c30 7px), linear-gradient(#7a9bcb, #b4cbe8 30px 150px, #5585c5 200px, #1d52a3 215px); }

  .leftstrip { left: 0; top: 481px; width: 5px; height: 416px; background: linear-gradient(90deg, transparent 3px, #1a2a44 3px 4px, #d4d0c8 4px), linear-gradient(#2d64b4 40px, #131d30 42px 240px, #5a86c4 248px, #1c4b94 250px 287px, #fff 287px); }
  .leftwin { left: 5px; top: 481px; width: 687px; height: 416px; background: #d4d0c8; border-bottom: 2px solid #5c86c8; }
  .leftwin .apptitle { padding-left: 2px; gap: 2px; }
  .leftwin .child { height: 376px; border-right: 1px solid #404040; border-bottom: 1px solid #404040; padding: 2px 2px 1px 2px; border-left-color: #fff; }
  .leftwin .title { padding-left: 2px; padding-right: 3px; gap: 0; }
  .close { width: 16px; height: 14px; margin-left: auto; }
  .leftwin .form { height: 354px; }
  .month { grid-template-columns: 102px 122px 78px 57px 15px 35px 16px auto; height: 22px; margin-top: 46px; padding-left: 25px; }
  .month > :nth-child(3) { grid-column: 3; }
  .picked { background: #fff; padding: 1px 0 1px 2px; }
  .picked u { display: flex; align-items: center; width: 100px; height: 17px; background: #0a246a; color: #fff; text-decoration: none; outline: 1px dotted #f5db95; outline-offset: -1px; padding-left: 2px; }
  .leftwin .month { grid-template-columns: 102px 200px 57px 15px 36px 15px auto; }
  .month .picked { width: 122px; }
  .group { margin: 12px 0 0 17px; width: 440px; height: 77px; background: #d4d0c8; border: solid #808080; border-width: 1px 1px 0; box-shadow: inset 1px 1px #fff; }
  .gtitle { height: 16px; padding: 0 0 0 8px; }
  .pair { grid-template-columns: 41px 84px 3px 25px 263px; height: 24px; padding-left: 9px; margin-top: 8px; }
  .pair .btn { grid-column: 4; width: 24px; }
  .p2 { margin-top: 0; }
  .p2 .off { margin-left: 1px; width: 263px; }
  .leftwin .rango { height: 18px; margin-top: 11px; padding-left: 21px; }
  .cont { grid-template-columns: 60px 84px 12px 36px 214px; height: 20px; padding-left: 19px; }
  .cont .btn { grid-column: 4; width: 24px; }
  .cont .field { font-size: 11px; }
  .c2 { margin-top: 1px; }
  .sum { grid-template-columns: 168px 15px 131px 15px 133px 15px auto; height: 20px; padding-left: 22px; }
  .s1 { margin-top: 10px; }
  .s2 { margin-top: 3px; }
  .cut { width: 117px; overflow: hidden; }
  .leftwin .actions { margin-top: 17px; padding-left: 225px; grid-template-columns: 84px 48px; }

  .note { display: flex; flex-direction: column; align-items: flex-start; background: #fff; border: 3px solid #000; font-size: 13px; line-height: 16.200px; font-weight: bold; }
  .n1 { left: 422px; top: 106px; width: 277px; height: 30px; padding: 0 2px; background: linear-gradient(#fff 21px, #d4d0c8 22px); }
  .n2 { left: 602px; top: 244px; width: 285px; height: 103px; border-right: 0; padding-left: 2px; }
  .n3 { left: 610px; top: 375px; width: 222px; height: 77px; padding: 4px 0 0 3px; }
  .n4 { left: 3px; top: 299px; width: 250px; height: 127px; padding: 1px 0 0; }
  .ink { left: 0; top: 0; }
</style>
